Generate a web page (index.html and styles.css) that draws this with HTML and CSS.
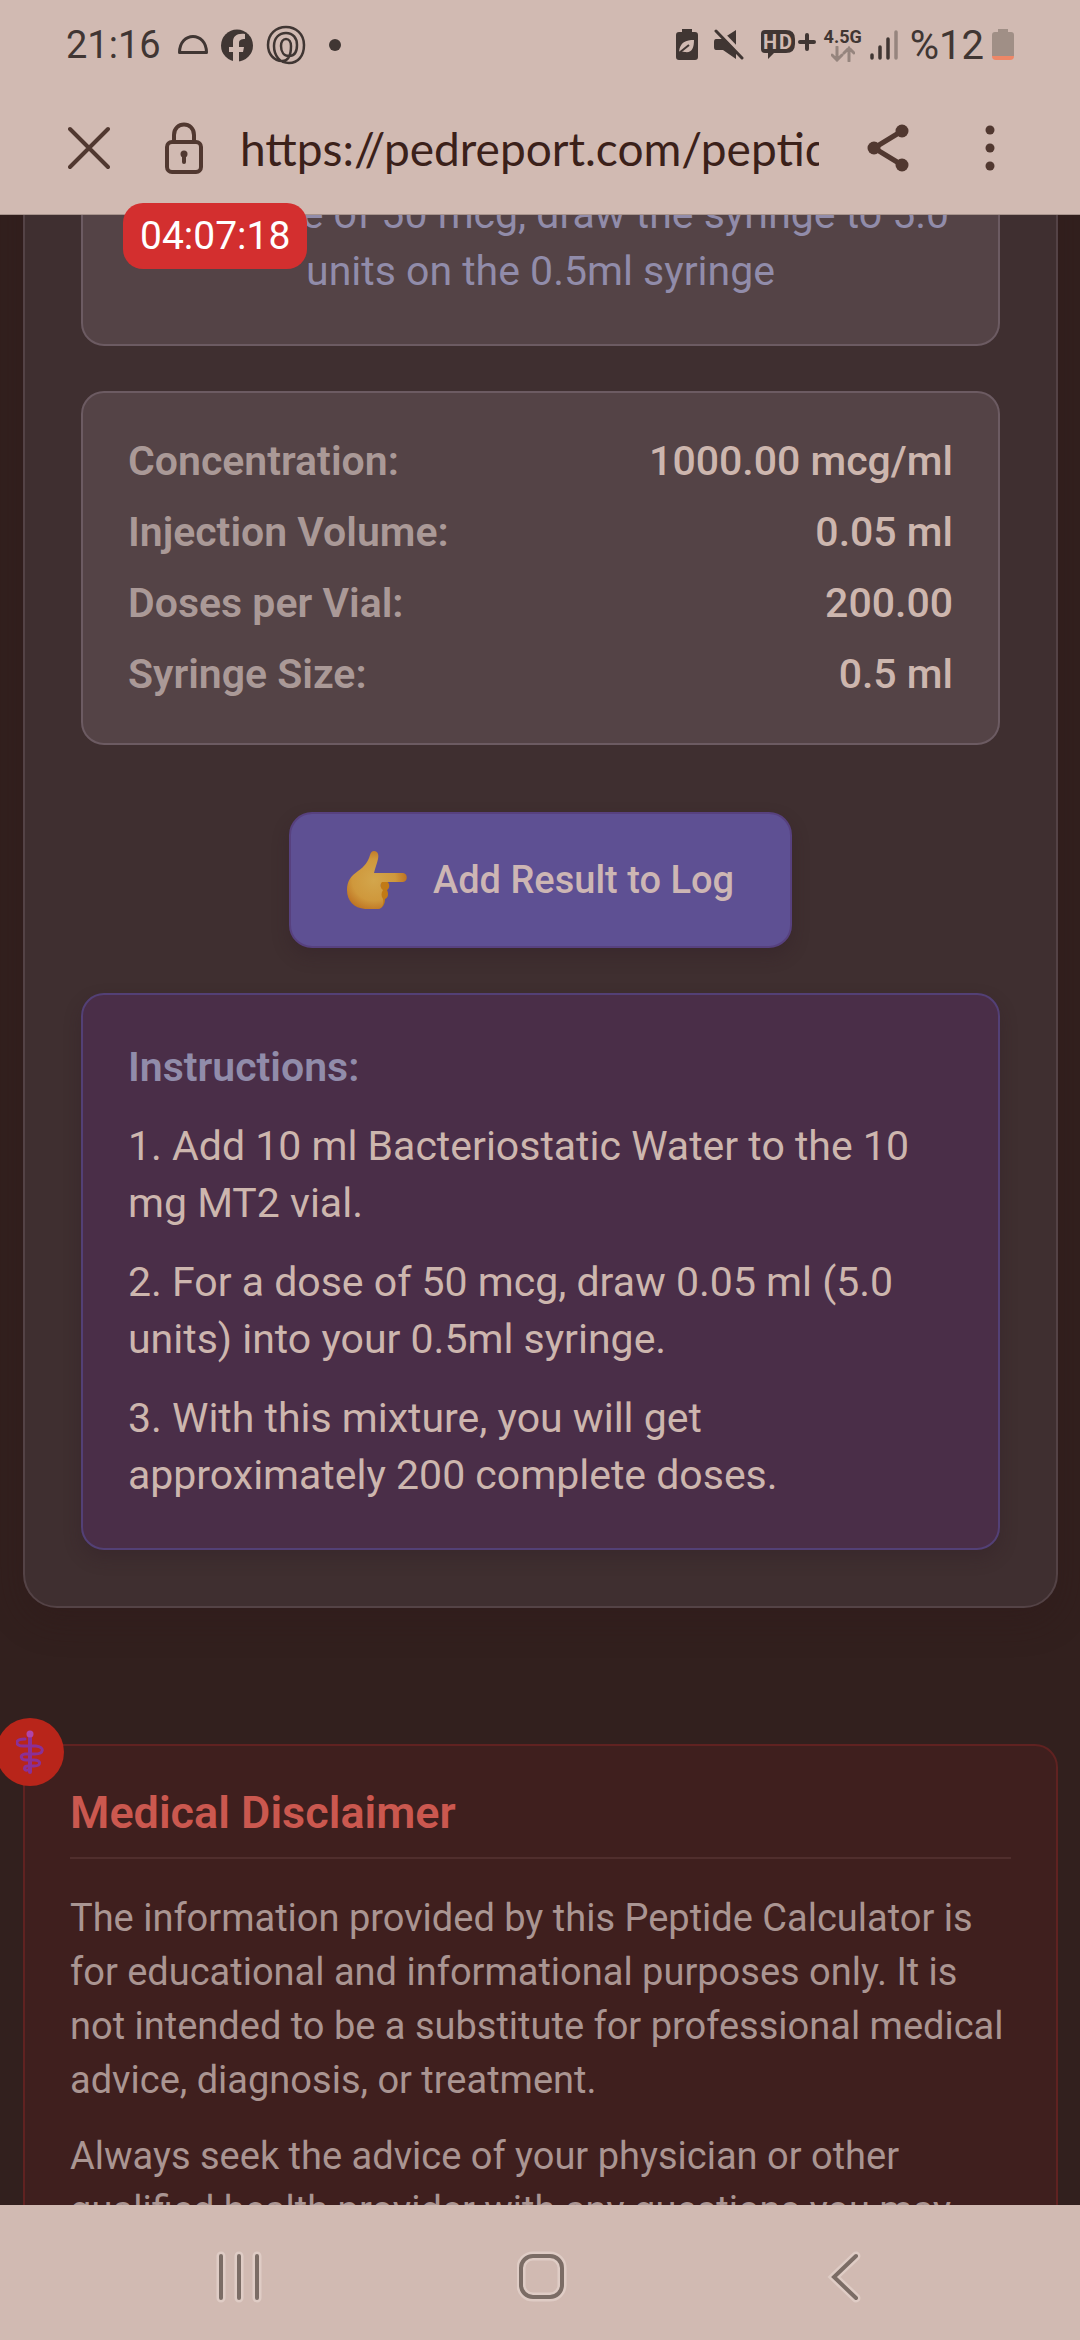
FILE: index.html
```
<!DOCTYPE html>
<html lang="en">
<head>
    <meta charset="UTF-8">
    <meta name="viewport" content="width=device-width, initial-scale=1">
    <title>Peptide Calculator</title>
    <link rel="stylesheet" href="styles.css">
</head>
<body>
    <header class="top">
        <!-- status bar -->
        <div class="status-bar">
            <div class="status-left">
                <span class="clock">21:16</span>
                <svg width="30" height="40" viewBox="0 0 30 40" fill="none" stroke="#403633" stroke-width="3" stroke-linejoin="round"><path d="M1.500 27.500 C1.500 6 28.500 6 28.500 27.500 Z"/></svg>
                <svg width="32" height="40" viewBox="0 0 32 40"><circle cx="16" cy="20.500" r="16" fill="#403633"/><path d="M12 38 V27 H8 V22 H12 V17 C12 11 16 8 24 9 V14 C20 14 18 15 18 18 V22 H23 L22 27 H18 V38 Z" fill="#d1bab2"/></svg>
                <svg width="40" height="40" viewBox="0 0 40 40" fill="none" stroke="#403633" stroke-width="2.500"><path d="M16 36 C8 36 2 29 2 20 C2 9 10 2 20 2 C30 2 38 9 38 20 C38 31 32 38 23 38 C14 38 8 31 8 21 C8 13 13 8 20 8 C27 8 31 13 31 20 C31 27 28 31 23 31 C18 31 15 27 15 21 C15 17 17 14 20 14 C23 14 25 17 25 21 C25 30 22 36 16 36 Z"/></svg>
                <span class="dot"></span>
            </div>
            <div class="status-right">
                <svg width="22" height="34" viewBox="0 0 22 34"><path d="M6 1 H16 V4 H19 Q22 4 22 7 V29 Q22 32 19 32 H3 Q0 32 0 29 V7 Q0 4 3 4 H6 Z" fill="#403633"/><path d="M3 24 C4 14 10 12 18 12 C18 20 16 25 9 24 C7 24 6 23 3 24 Z" fill="#d1bab2"/><path d="M3 25 L13 17" stroke="#403633" stroke-width="2"/></svg>
                <svg class="icon-mute" width="30" height="34" viewBox="0 0 30 34"><path d="M2 11 H8 L22 2 V31 L9 22 H2 Q0 22 0 19 V14 Q0 11 2 11 Z" fill="#403633"/><path d="M3 0 L30 28" stroke="#d1bab2" stroke-width="4"/><path d="M2 3 L28 30" stroke="#403633" stroke-width="3" stroke-linecap="round"/></svg>
                <svg class="icon-hd" width="56" height="34" viewBox="0 0 56 34"><path d="M5 2 H26 Q35 2 35 11 V16 Q35 25 26 25 H14 L8 31 V25 H5 Q1 25 1 21 V6 Q1 2 5 2 Z" fill="#403633"/><text x="3" y="21" font-size="20" font-weight="700" fill="#d1bab2">H</text><text x="19" y="21" font-size="20" font-weight="700" fill="#d1bab2">D</text><path d="M40 14 H54 M47 7 V21" fill="none" stroke="#403633" stroke-width="4" stroke-linecap="round"/></svg>
                <div class="network">
                    <span>4.5G</span>
                    <svg width="24" height="16" viewBox="0 0 24 16" fill="none" stroke="#96857e" stroke-width="3" stroke-linecap="round"><path d="M6 1 V14 M1 9 L6 14 L11 9 M18 15 V2 M13 7 L18 2 L23 7"/></svg>
                </div>
                <svg width="28" height="34" viewBox="0 0 28 34" stroke-width="3.500" stroke-linecap="round" stroke="#403633"><path d="M2 27 V30 M10 19 V30 M18 11 V30"/><path d="M26 4 V30" stroke="#96857e"/></svg>
                <span class="percent">%12</span>
                <svg width="22" height="34" viewBox="0 0 22 34"><path d="M6 1 H16 V4 H19 Q22 4 22 7 V28 H0 V7 Q0 4 3 4 H6 Z" fill="#a08f86"/><path d="M0 28 H22 Q22 32 18 32 H4 Q0 32 0 28 Z" fill="#ee8767"/></svg>
            </div>
        </div>
        <!-- address bar -->
        <div class="address-bar">
            <button class="icon-button" type="button" aria-label="Close">
                <svg width="42" height="44" viewBox="0 0 42 44" fill="none" stroke="#513830" stroke-width="4" stroke-linecap="round"><path d="M2 3 L40 41 M40 3 L2 41"/></svg>
            </button>
            <button class="icon-button lock" type="button" aria-label="Site information">
                <svg width="40" height="52" viewBox="0 0 40 52" fill="none" stroke="#513830" stroke-width="4"><path d="M10 20 V13 C10 -1 30 -1 30 13 V20"/><rect x="3" y="20" width="34" height="30" rx="5"/><circle cx="20" cy="32" r="3.500" fill="#513830" stroke="none"/><path d="M20 33 V40" stroke-linecap="round"/></svg>
            </button>
            <span class="url">https://pedreport.com/peptide</span>
            <button class="icon-button" type="button" aria-label="Share">
                <svg width="42" height="48" viewBox="0 0 42 48" fill="#513830" stroke="#513830"><path d="M35 7 L7 24 L35 41" fill="none" stroke-width="5"/><circle cx="35" cy="7" r="6.500" stroke="none"/><circle cx="7" cy="24" r="6.500" stroke="none"/><circle cx="35" cy="41" r="6.500" stroke="none"/></svg>
            </button>
            <button class="icon-button more" type="button" aria-label="More options">
                <svg width="10" height="48" viewBox="0 0 10 48" fill="#513830"><circle cx="5" cy="6" r="4.500"/><circle cx="5" cy="24" r="4.500"/><circle cx="5" cy="42" r="4.500"/></svg>
            </button>
        </div>
        <div class="timer">04:07:18</div>
    </header>

    <main class="page">
        <section class="calculator">
            <div class="box syringe-note">
                <p>For a dose of 50 mcg, draw the syringe to 5.0 units on the 0.5ml syringe</p>
            </div>

            <dl class="box results">
                <div class="row"><dt>Concentration:</dt><dd>1000.00 mcg/ml</dd></div>
                <div class="row"><dt>Injection Volume:</dt><dd>0.05 ml</dd></div>
                <div class="row"><dt>Doses per Vial:</dt><dd>200.00</dd></div>
                <div class="row"><dt>Syringe Size:</dt><dd>0.5 ml</dd></div>
            </dl>

            <button class="log-button" type="button">
                <svg width="62" height="60" viewBox="0 0 62 60">
                    <defs>
                        <radialGradient id="hand" cx="45%" cy="50%" r="60%">
                            <stop offset="0" stop-color="#d3a64c"/>
                            <stop offset="0.600" stop-color="#cf983c"/>
                            <stop offset="1" stop-color="#b9691c"/>
                        </radialGradient>
                    </defs>
                    <path d="M34 31 H40 C43 34 43 38 40 40 C42 44 41 48 38 49 C38 54 36 58 31 59 Z" fill="#c17a16"/>
                    <path d="M27 1 C31 1 32 5 31 9 C30 14 28 18 27 23 H56 C61 23 61 32 56 32 H35 C33 34 33 38 36 40 C34 43 34 46 36 49 C37 54 35 59 31 59 H18 C7 58 0 51 0 40 C0 31 4 26 11 21 C18 16 21 12 23 5 C24 2 25 1 27 1 Z" fill="url(#hand)"/>
                </svg>
                <span>Add Result to Log</span>
            </button>

            <div class="box instructions">
                <h3>Instructions:</h3>
                <p>1. Add 10 ml Bacteriostatic Water to the 10 mg MT2 vial.</p>
                <p>2. For a dose of 50 mcg, draw 0.05 ml (5.0 units) into your 0.5ml syringe.</p>
                <p>3. With this mixture, you will get approximately 200 complete doses.</p>
            </div>
        </section>

        <section class="disclaimer">
            <span class="disclaimer-badge">
                <svg width="28" height="44" viewBox="0 0 28 44" fill="none" stroke="#8b2f96" stroke-width="3" stroke-linecap="round"><path d="M14 5 V42" stroke-width="4"/><path d="M9 9 C-2 9 -1 16 7 16 H20 C29 17 28 24 19 24 H9 C3 25 5 30 10 30 H18 C26 30 25 36 18 36 H12 C7 36 8 41 11 40"/><circle cx="14" cy="4" r="3.500" fill="#b044a8" stroke="none"/></svg>
            </span>
            <h2>Medical Disclaimer</h2>
            <p>The information provided by this Peptide Calculator is for educational and informational purposes only. It is not intended to be a substitute for professional medical advice, diagnosis, or treatment.</p>
            <p>Always seek the advice of your physician or other qualified health provider with any questions you may have regarding a medical condition.</p>
        </section>
    </main>

    <!-- system navigation -->
    <nav class="nav-bar">
        <button class="icon-button" type="button" aria-label="Recent apps">
            <svg width="50" height="54" viewBox="0 0 50 54" fill="none" stroke-linecap="round"><path d="M7 6 V48 M25 6 V48 M43 6 V48" stroke="#dfccc5" stroke-width="9"/><path d="M7 6 V48 M25 6 V48 M43 6 V48" stroke="#7b6c65" stroke-width="4"/></svg>
        </button>
        <button class="icon-button" type="button" aria-label="Home">
            <svg width="50" height="54" viewBox="0 0 50 54" fill="none"><rect x="4" y="6" width="41" height="41" rx="12" stroke="#dfccc5" stroke-width="9"/><rect x="4" y="6" width="41" height="41" rx="12" stroke="#7b6c65" stroke-width="4"/></svg>
        </button>
        <button class="icon-button" type="button" aria-label="Back">
            <svg width="50" height="54" viewBox="0 0 50 54" fill="none" stroke-linecap="round"><path d="M36 6 L14 27 L36 48" stroke="#dfccc5" stroke-width="9"/><path d="M36 6 L14 27 L36 48" stroke="#7b6c65" stroke-width="4"/></svg>
        </button>
    </nav>
</body>
</html>
```
FILE: styles.css
```
* {
    box-sizing: border-box;
}
body {
    background-color: #32201e;
    color: #cdb6ae;
    font-family: Roboto, sans-serif;
    font-size: 41px;
    display: flex;
    flex-direction: column;
    height: 100vh;
    margin: 0;
    overflow: hidden;
}
h2, h3, p, dl, dd {
    margin: 0;
}
button {
    font-family: inherit;
    cursor: pointer;
}
svg {
    display: block;
    flex-shrink: 0;
}

/* browser chrome */
.top {
    position: relative;
    z-index: 1;
    flex-shrink: 0;
    background-color: #d1bab2;
    border-bottom: 1px solid #a8948d;
}
.status-bar {
    display: flex;
    justify-content: space-between;
    align-items: center;
    height: 90px;
    padding: 0 66px;
    color: #403633;
    font-size: 38px;
}
.status-left {
    display: flex;
    align-items: center;
    gap: 13px;
}
.clock {
    margin-right: 4px;
}
.dot {
    width: 12px;
    height: 12px;
    margin-left: 10px;
    border-radius: 50%;
    background-color: #403633;
}
.status-right {
    display: flex;
    align-items: center;
    gap: 8px;
}
.icon-mute, .icon-hd {
    margin-left: 8px;
}
.network {
    display: flex;
    flex-direction: column;
    align-items: center;
    font-size: 18px;
    font-weight: 700;
    line-height: 18px;
}
.percent {
    margin-left: 4px;
    font-size: 40px;
}
.address-bar {
    display: flex;
    align-items: center;
    height: 124px;
    padding: 0 85px 8px 68px;
}
.icon-button {
    display: flex;
    align-items: center;
    justify-content: center;
    padding: 0;
    background: none;
    border: none;
}
.lock {
    margin-left: 54px;
}
.more {
    margin-left: 76px;
}
.url {
    flex: 1;
    overflow: hidden;
    margin: 0 48px 0 36px;
    color: #3b211a;
    font-family: Lato, sans-serif;
    font-size: 46px;
    white-space: nowrap;
}
.timer {
    position: absolute;
    top: 203px;
    left: 123px;
    padding: 0 17px;
    background-color: #d32f2f;
    border-radius: 20px;
    color: #ffffff;
    font-size: 39px;
    line-height: 66px;
}

/* page content */
.page {
    flex: 1;
    min-height: 0;
    overflow: hidden;
    padding: 0 22px 0 23px;
}
.calculator {
    display: flex;
    flex-direction: column;
    margin-top: -77px;
    padding: 0 56px 56px;
    background-color: #3f2f30;
    border: 2px solid #544346;
    border-radius: 34px;
    box-shadow: 0 12px 34px rgba(48, 24, 24, 0.4);
}
.box {
    padding: 44px 45px;
    background-color: #544346;
    border: 2px solid #6c5b62;
    border-radius: 23px;
}
.syringe-note {
    color: #918caa;
    line-height: 57px;
    text-align: center;
}
.results {
    display: flex;
    flex-direction: column;
    gap: 14px;
    margin-top: 45px;
    padding: 40px 45px;
    line-height: 57px;
}
.row {
    display: flex;
    justify-content: space-between;
}
.row dt {
    color: #aa9997;
    font-weight: 600;
}
.row dd {
    font-weight: 500;
}
.log-button {
    display: flex;
    align-items: center;
    align-self: center;
    gap: 24px;
    height: 136px;
    margin: 67px 0 45px;
    padding: 0 56px;
    background-color: #5e5093;
    border: 2px solid #57417f;
    border-radius: 23px;
    box-shadow: 0 8px 17px rgba(48, 28, 36, 0.3);
    color: #cdb6b4;
    font-size: 38px;
    font-weight: 500;
}
.instructions {
    background-color: #4a2e48;
    border-color: #534076;
    box-shadow: 0 8px 17px rgba(48, 28, 36, 0.3);
    line-height: 57px;
}
.instructions h3 {
    color: #918caa;
    font-size: 41px;
    font-weight: 600;
}
.instructions p {
    margin-top: 22px;
}
.disclaimer {
    position: relative;
    margin-top: 136px;
    padding: 35px 45px;
    background-color: #3f1f1e;
    border: 2px solid #602221;
    border-radius: 23px;
    color: #aa9592;
    font-size: 38px;
    line-height: 54px;
}
.disclaimer h2 {
    margin-bottom: 32px;
    padding-bottom: 12px;
    border-bottom: 2px solid #502e2d;
    color: #cb584f;
    font-size: 45px;
    font-weight: 600;
    line-height: 64px;
}
.disclaimer p {
    margin-top: 22px;
}
.disclaimer-badge {
    position: absolute;
    top: -28px;
    left: -29px;
    display: flex;
    align-items: center;
    justify-content: center;
    width: 68px;
    height: 68px;
    background-color: #b8251a;
    border-radius: 50%;
}

/* bottom bar */
.nav-bar {
    position: relative;
    display: flex;
    flex-shrink: 0;
    justify-content: space-between;
    align-items: center;
    height: 135px;
    padding: 8px 210px 0 214px;
    background-color: #d1bab2;
}
```
